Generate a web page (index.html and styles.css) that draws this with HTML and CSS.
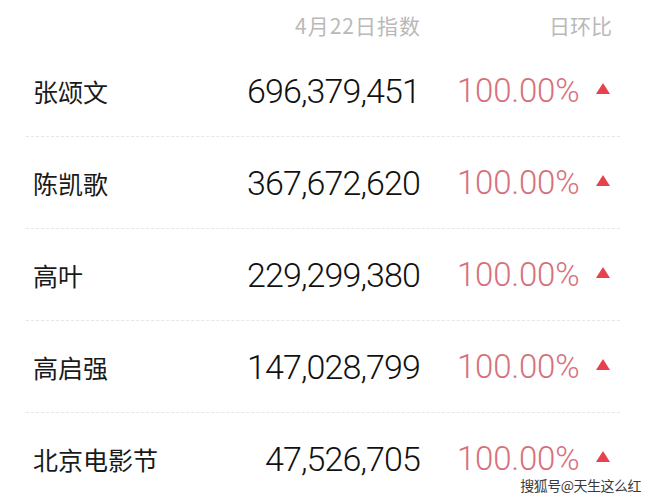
FILE: index.html
```html
<!DOCTYPE html>
<html lang="zh">
<head>
<meta charset="utf-8">
<link rel="stylesheet" href="styles.css">
</head>
<body>
<div class="board">
  <div class="row head">
    <span></span>
    <span class="h-num">4月22日指数</span>
    <span class="h-pct">日环比</span>
  </div>
  <div class="row item"><span class="name">张颂文</span><span class="num">696,379,451</span><span class="pct">100.00%</span><span class="tri"></span></div>
  <div class="row item"><span class="name">陈凯歌</span><span class="num">367,672,620</span><span class="pct">100.00%</span><span class="tri"></span></div>
  <div class="row item"><span class="name">高叶</span><span class="num">229,299,380</span><span class="pct">100.00%</span><span class="tri"></span></div>
  <div class="row item"><span class="name">高启强</span><span class="num">147,028,799</span><span class="pct">100.00%</span><span class="tri"></span></div>
  <div class="row item last"><span class="name">北京电影节</span><span class="num">47,526,705</span><span class="pct">100.00%</span><span class="tri"></span></div>
</div>
<div class="mark">搜狐号@天生这么红</div>
</body>
</html>
```
FILE: styles.css
```css
html, body {
  margin: 0;
  padding: 0;
  background: #fff;
  overflow: hidden;
}
body {
  width: 650px;
  height: 497px;
  position: relative;
  font-family: "Noto Sans CJK SC", "Noto Sans", sans-serif;
}
.board {
  margin-left: 26px;
  width: 594px;
}
.row {
  display: grid;
  grid-template-columns: 1fr auto 139px 13px;
  align-items: center;
  padding: 0 11px 0 7px;
}
.head {
  height: 45px;
  align-items: start;
  padding-top: 10px;
  box-sizing: border-box;
  color: #b9b9b9;
  font-size: 21px;
  line-height: 30px;
}
.h-num {
  grid-column: 2;
  text-align: right;
  letter-spacing: 1px;
  margin-right: 36px;
}
.h-pct {
  grid-column: 3 / span 2;
  text-align: right;
  margin-right: -3px;
}
.item {
  height: 91px;
  border-bottom: 1px dashed #e6e6e6;
}
.item.last {
  border-bottom: none;
}
.name {
  font-size: 25px;
  color: #1a1a1a;
}
.num {
  font-family: Roboto, "Noto Sans", sans-serif;
  font-weight: 300;
  font-size: 34px;
  line-height: 1;
  color: #111;
  text-align: right;
  margin-right: 37px;
  letter-spacing: -0.9px;
}
.pct {
  font-family: Roboto, "Noto Sans", sans-serif;
  font-weight: 300;
  font-size: 33px;
  line-height: 1;
  color: #d7707a;
  white-space: nowrap;
  letter-spacing: -0.2px;
}
.tri {
  width: 0;
  height: 0;
  border-left: 7px solid transparent;
  border-right: 7px solid transparent;
  border-bottom: 11px solid #e8414e;
  margin-top: -5px;
}
.mark {
  position: absolute;
  right: 9px;
  bottom: 4px;
  font-size: 14px;
  line-height: 16px;
  color: #3a3a3a;
  text-shadow: 0 0 1px #fff, 0 0 1px #fff, 1px 1px 0 #fff, -1px -1px 0 #fff;
  letter-spacing: -0.5px;
}
```
